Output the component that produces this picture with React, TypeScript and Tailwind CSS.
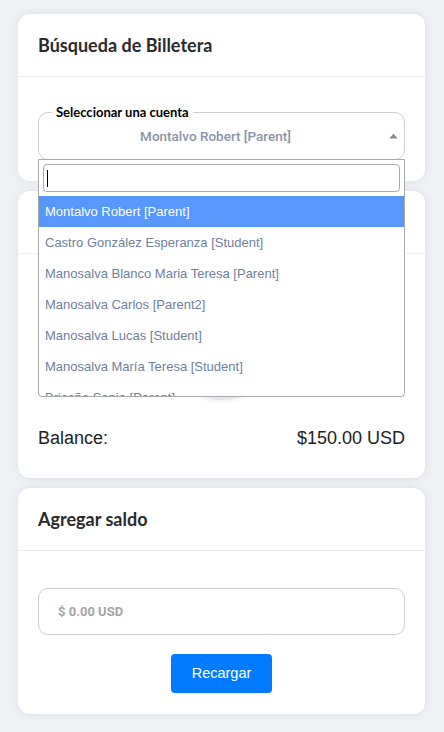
const options = [
  "Montalvo Robert [Parent]",
  "Castro González Esperanza [Student]",
  "Manosalva Blanco Maria Teresa [Parent]",
  "Manosalva Carlos [Parent2]",
  "Manosalva Lucas [Student]",
  "Manosalva María Teresa [Student]",
  "Briceño Sonia [Parent]",
];

function CardHeader({ title }: { title: string }) {
  return (
    <div className="flex h-[63px] items-center border-b border-[#eceef2] px-5 font-['Lato',sans-serif] text-[18px] font-bold text-[#2a2a2a]">
      {title}
    </div>
  );
}

export default function App() {
  return (
    <div className="min-h-screen bg-[#f0f1f5] px-[18px] pt-[14px] pb-[18px] font-['Liberation_Sans',Arial,sans-serif]">
      <div className="flex w-[407px] flex-col gap-[10px]">
        {/* account search */}
        <div className="relative z-10 rounded-[12px] bg-white shadow-[0_0_10px_rgba(20,30,60,0.08)]">
          <CardHeader title="Búsqueda de Billetera" />
          <div className="px-5 pt-[27px] pb-[21px]">
            <div className="relative">
              <fieldset className="rounded-[10px] border border-[#cfcfcf] pl-[13px]">
                <legend className="px-1 font-['Lato',sans-serif] text-[13px] font-bold leading-[16px] text-black">
                  Seleccionar una cuenta
                </legend>
                <div className="relative flex h-[31px] items-center justify-center pr-[25px] pt-[2px] font-['Roboto',sans-serif] text-[13.5px] font-medium text-[#8a94a8]">
                  Montalvo Robert [Parent]
                  <svg className="absolute right-[6px] top-[13px]" width="9" height="6" viewBox="0 0 9 6">
                    <path d="M0.5 5.5 L4.5 0.5 L8.5 5.5 Z" fill="#8a8a8a" />
                  </svg>
                </div>
                <div className="h-[8px]" />
              </fieldset>

              {/* open dropdown */}
              <div className="absolute left-0 right-0 top-[calc(100%-1px)] overflow-hidden rounded-b-[4px] border border-[#aaaaaa] bg-white">
                <div className="p-[4px]">
                  <div className="flex h-[28px] items-center rounded-[4px] border border-[#aaaaaa] px-[3px]">
                    <span className="h-[17px] w-px bg-black" />
                  </div>
                </div>
                <div className="h-[200px] overflow-hidden">
                  {options.map((o, i) => (
                    <div
                      key={o}
                      className={
                        i === 0
                          ? "flex h-[31px] items-center bg-[#5897fb] px-[6px] text-[13px] text-white"
                          : "flex h-[31px] items-center px-[6px] text-[13px] text-[#6f7fa0]"
                      }
                    >
                      {o}
                    </div>
                  ))}
                </div>
              </div>
            </div>
          </div>
        </div>

        {/* wallet */}
        <div className="rounded-[12px] bg-white shadow-[0_0_10px_rgba(20,30,60,0.08)]">
          <CardHeader title="Billetera" />
          <div className="px-5 pt-[42px] pb-[29px]">
            <div className="mx-auto h-[104px] w-[104px] rounded-full bg-[#e3e6ec] shadow-[0_1px_4px_rgba(0,0,0,0.08)]" />
            <div className="mt-[28px] flex items-center justify-between text-[18px] leading-[21px] text-[#222]">
              <span>Balance:</span>
              <span>$150.00 USD</span>
            </div>
          </div>
        </div>

        {/* add balance */}
        <div className="rounded-[12px] bg-white shadow-[0_0_10px_rgba(20,30,60,0.08)]">
          <CardHeader title="Agregar saldo" />
          <div className="flex flex-col items-center px-5 pt-[37px] pb-[21px]">
            <div className="flex h-[47px] w-full items-center rounded-[10px] border border-[#cfcfcf] px-[19px] font-['Roboto',sans-serif] text-[13px] font-bold text-[#a5a5a5]">
              $ 0.00 USD
            </div>
            <button className="mt-[19px] h-[39px] w-[101px] rounded-[4px] bg-[#007bff] text-[14.5px] text-white">
              Recargar
            </button>
          </div>
        </div>
      </div>
    </div>
  );
}
